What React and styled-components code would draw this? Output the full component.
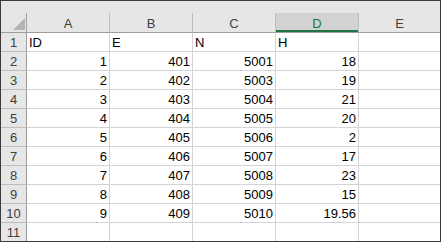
import React from "react";
import styled, { createGlobalStyle, css } from "styled-components";

const GlobalStyle = createGlobalStyle`
  html, body {
    margin: 0;
    padding: 0;
    background: #ffffff;
  }
  body {
    font-family: "Liberation Sans", Arial, sans-serif;
  }
`;

const Colors = {
  frame: "#3b3b3b",
  headerBg: "#e6e6e6",
  headerSelBg: "#d2d2d2",
  headerLine: "#bdbdbd",
  headerEdge: "#9e9e9e",
  gridLine: "#d4d4d4",
  green: "#217346",
  text: "#000000",
  headerText: "#404040",
};

const COLS = ["A", "B", "C", "D", "E"];

const rows = [
  ["ID", "E", "N", "H"],
  [1, 401, 5001, 18],
  [2, 402, 5003, 19],
  [3, 403, 5004, 21],
  [4, 404, 5005, 20],
  [5, 405, 5006, 2],
  [6, 406, 5007, 17],
  [7, 407, 5008, 23],
  [8, 408, 5009, 15],
  [9, 409, 5010, 19.56],
  [],
];

const SheetFrame = styled.div`
  box-sizing: border-box;
  width: 441px;
  height: 242px;
  border: 1px solid ${Colors.frame};
  overflow: hidden;
  display: grid;
  grid-template-columns: 26px 83px 83px 83px 83px 81px;
  grid-template-rows: 12px 20px repeat(10, 19px) 18px;
  font-size: 13px;
  color: ${Colors.text};
`;

const TopStrip = styled.div`
  grid-column: 1 / -1;
  background: ${Colors.headerBg};
`;

const Corner = styled.div`
  box-sizing: border-box;
  position: relative;
  background: ${Colors.headerBg};
  border-right: 1px solid ${Colors.headerEdge};
  border-bottom: 1px solid ${Colors.headerEdge};
`;

const CornerTriangle = styled.svg`
  position: absolute;
  right: 1px;
  bottom: 2px;
`;

const ColHeader = styled.div`
  box-sizing: border-box;
  display: flex;
  align-items: center;
  justify-content: center;
  padding-top: 1px;
  background: ${(p) => (p.$selected ? Colors.headerSelBg : Colors.headerBg)};
  color: ${(p) => (p.$selected ? Colors.green : Colors.headerText)};
  border-right: ${(p) => (p.$last ? "none" : `1px solid ${Colors.headerLine}`)};
  border-bottom: 1px solid ${Colors.headerEdge};
  ${(p) =>
    p.$selected &&
    css`
      box-shadow: inset 0 -2px 0 ${Colors.green};
    `}
`;

const RowHeader = styled.div`
  box-sizing: border-box;
  display: flex;
  align-items: center;
  justify-content: center;
  background: ${Colors.headerBg};
  color: ${Colors.headerText};
  border-right: 1px solid ${Colors.headerEdge};
  border-bottom: ${(p) => (p.$last ? "none" : `1px solid ${Colors.headerLine}`)};
`;

const Cell = styled.div`
  box-sizing: border-box;
  display: flex;
  align-items: center;
  justify-content: ${(p) => (p.$numeric ? "flex-end" : "flex-start")};
  padding: 1px 2px 0 2px;
  white-space: nowrap;
  border-right: ${(p) => (p.$lastCol ? "none" : `1px solid ${Colors.gridLine}`)};
  border-bottom: ${(p) => (p.$lastRow ? "none" : `1px solid ${Colors.gridLine}`)};
`;

export default function App() {
  return (
    <>
      <GlobalStyle />
      <SheetFrame>
        <TopStrip />
        <Corner>
          <CornerTriangle width="12" height="12" viewBox="0 0 12 12">
            <polygon points="12,0 12,12 0,12" fill="#b4b4b4" />
          </CornerTriangle>
        </Corner>
        {COLS.map((c, i) => (
          <ColHeader key={c} $selected={c === "D"} $last={i === COLS.length - 1}>
            {c}
          </ColHeader>
        ))}
        {rows.map((row, r) => {
          const lastRow = r === rows.length - 1;
          return (
            <React.Fragment key={r}>
              <RowHeader $last={lastRow}>{r + 1}</RowHeader>
              {COLS.map((c, ci) => {
                const v = row[ci];
                return (
                  <Cell
                    key={c}
                    $numeric={typeof v === "number"}
                    $lastCol={ci === COLS.length - 1}
                    $lastRow={lastRow}
                  >
                    {v}
                  </Cell>
                );
              })}
            </React.Fragment>
          );
        })}
      </SheetFrame>
    </>
  );
}
